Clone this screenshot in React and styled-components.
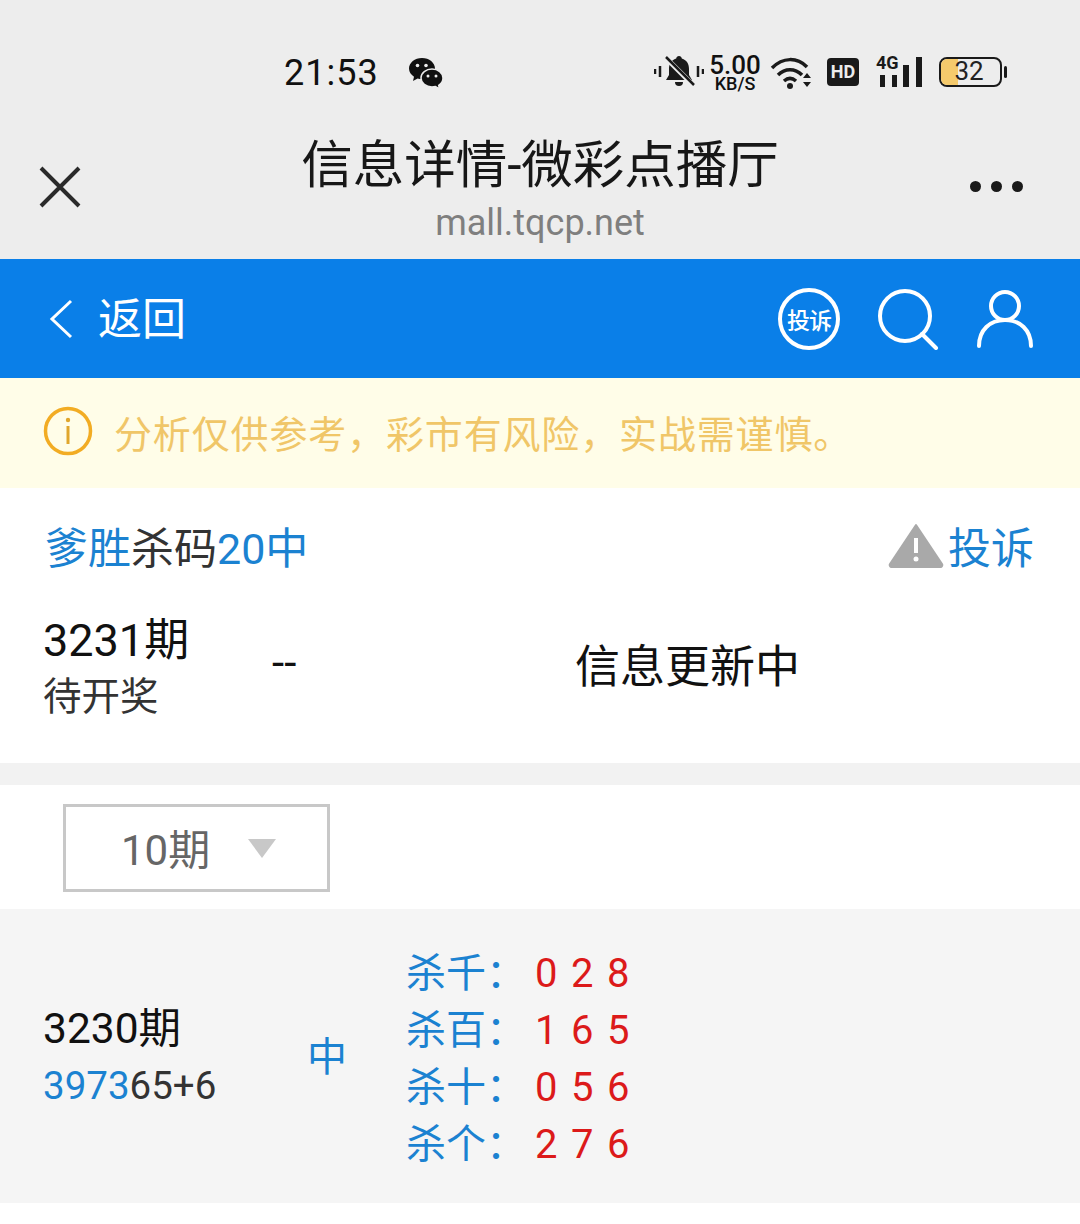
import React from 'react'
import styled, { createGlobalStyle } from 'styled-components'

const CJK = `Roboto, "Noto Sans CJK SC", sans-serif`

const Global = createGlobalStyle`
  html, body {
    margin: 0;
    padding: 0;
    background: #fff;
    font-family: ${CJK};
  }
`

const Page = styled.div`
  width: 1080px;
  height: 1224px;
  overflow: hidden;
  display: flex;
  flex-direction: column;
  background: #fff;
`

const TopChrome = styled.header`
  height: 259px;
  flex: none;
  background: #ededed;
  display: flex;
  flex-direction: column;
`

const StatusBar = styled.div`
  height: 130px;
  flex: none;
  padding: 51px 0 0 284px;
  box-sizing: border-box;
  display: flex;
  align-items: flex-start;
  color: #111;
`

const Clock = styled.span`
  font-size: 36px;
  line-height: 44px;
  letter-spacing: 1px;
  width: 124px;
`

const WeChatSlot = styled.span`
  margin-top: 6px;
  height: 32px;
`

const StatusIcons = styled.div`
  margin: -1px 0 0 210px;
  display: flex;
  align-items: center;
  height: 44px;
`

const Speed = styled.div`
  width: 54px;
  margin: 0 8px 0 4px;
  display: flex;
  flex-direction: column;
  align-items: center;
  font-weight: 500;
`

const SpeedValue = styled.span`
  font-size: 26px;
  line-height: 22px;
`

const SpeedUnit = styled.span`
  font-size: 18px;
  line-height: 15px;
`

const HdBadge = styled.span`
  width: 32px;
  height: 28px;
  margin: 0 16px 0 13px;
  background: #1a1a1a;
  color: #ededed;
  border-radius: 4px;
  font-size: 18px;
  font-weight: 700;
  line-height: 28px;
  text-align: center;
`

const Battery = styled.div`
  position: relative;
  width: 63px;
  height: 30px;
  box-sizing: border-box;
  margin-left: 16px;
  padding-right: 3px;
  border: 2.5px solid #1a1a1a;
  border-radius: 8px;
  overflow: hidden;
  text-align: center;
  font-size: 26px;
  line-height: 25px;
  color: #222;
`

const BatteryFill = styled.div`
  position: absolute;
  inset: 0 auto 0 0;
  width: 28%;
  background: #f5ca6c;
`

const BatteryLabel = styled.span`
  position: relative;
`

const BatteryTip = styled.span`
  width: 3px;
  height: 12px;
  margin-left: 2px;
  background: #1a1a1a;
  border-radius: 2px;
`

const TitleBar = styled.div`
  flex: 1;
  display: grid;
  grid-template-columns: 120px 1fr 120px;
  align-items: center;
`

const TitleBlock = styled.div`
  display: flex;
  flex-direction: column;
  align-items: center;
  margin-top: -13px;
`

const Title = styled.div`
  font-size: 51.5px;
  line-height: 70px;
  color: #171717;
  white-space: nowrap;
`

const Domain = styled.div`
  font-size: 36px;
  line-height: 44px;
  color: #7f7f7f;
`

const CloseSlot = styled.div`
  padding: 0 0 0 38px;
  height: 44px;
  margin-bottom: 16px;
`

const DotsSlot = styled.div`
  display: flex;
  justify-content: flex-end;
  gap: 10px;
  padding-right: 57px;
  margin-bottom: 16px;
`

const Dot = styled.span`
  width: 11px;
  height: 11px;
  flex: none;
  border-radius: 50%;
  background: #1a1a1a;
`

const NavBar = styled.nav`
  height: 119px;
  flex: none;
  background: #0a7fe8;
  color: #fff;
  display: flex;
  align-items: center;
  padding: 0 46px 0 48px;
`

const BackLabel = styled.span`
  margin: 2px 0 0 24px;
  font-size: 44px;
  line-height: 60px;
`

const NavIcons = styled.div`
  margin-left: auto;
  display: flex;
  align-items: center;
  gap: 37px;
`

const ReportCircle = styled.span`
  width: 62px;
  height: 62px;
  box-sizing: border-box;
  border: 4px solid #fff;
  border-radius: 50%;
  display: flex;
  align-items: center;
  justify-content: center;
  font-size: 23px;
  font-weight: 500;
  letter-spacing: -1px;
  white-space: nowrap;
`

const Notice = styled.div`
  height: 110px;
  flex: none;
  background: #fffde8;
  box-sizing: border-box;
  padding: 0 0 4px 43px;
  display: flex;
  align-items: center;
  color: #f0c668;
  font-size: 38px;
  letter-spacing: 0.85px;
`

const NoticeText = styled.span`
  margin-left: 21px;
  white-space: nowrap;
`

const Card = styled.section`
  height: 275px;
  flex: none;
  box-sizing: border-box;
  padding: 0 46px 0 43px;
  background: #fff;
`

const CardHead = styled.div`
  height: 120px;
  box-sizing: border-box;
  padding: 0 0 6px 2px;
  display: flex;
  align-items: center;
  justify-content: space-between;
  font-size: 43px;
  color: #333;
`

const Blue = styled.span`
  color: #1b82d1;
`

const ReportLink = styled.span`
  display: flex;
  align-items: center;
  gap: 4px;
  font-size: 43px;
  color: #1b82d1;
`

const CurrentRow = styled.div`
  margin-top: 4px;
  display: grid;
  grid-template-columns: 229px 303px auto;
  align-items: center;
  color: #111;
`

const Issue = styled.div`
  font-size: 45px;
  line-height: 58px;
`

const IssueStatus = styled.div`
  font-size: 38.5px;
  line-height: 54px;
  color: #333;
`

const Dash = styled.div`
  font-size: 44px;
  margin-bottom: 10px;
`

const Updating = styled.div`
  font-size: 45px;
  margin-bottom: 10px;
`

const Divider = styled.div`
  height: 22px;
  flex: none;
  background: #f2f2f2;
`

const FilterBar = styled.div`
  height: 124px;
  flex: none;
  box-sizing: border-box;
  padding: 19px 0 0 63px;
  background: #fff;
`

const Select = styled.div`
  width: 267px;
  height: 88px;
  box-sizing: border-box;
  border: 3px solid #c8c8c8;
  display: flex;
  align-items: center;
  padding: 0 0 4px 55px;
  font-size: 42px;
  color: #666;
`

const Caret = styled.span`
  margin: 4px 0 0 38px;
  border-style: solid;
  border-width: 19px 14.5px 0;
  border-color: #c8c8c8 transparent transparent;
`

const HistoryRow = styled.div`
  height: 294px;
  flex: none;
  box-sizing: border-box;
  background: #f5f5f5;
  display: flex;
  align-items: flex-start;
  padding: 36px 0 0 43px;
`

const HistoryIssue = styled.div`
  width: 264px;
  padding-top: 55px;
`

const HistoryTitle = styled.div`
  font-size: 42.5px;
  line-height: 58px;
  color: #111;
`

const HistoryCode = styled.div`
  font-size: 38.5px;
  line-height: 56px;
  color: #333;
`

const HitMark = styled.div`
  width: 99px;
  padding-top: 84px;
  font-size: 40px;
  line-height: 58px;
  color: #1b82d1;
`

const KillList = styled.div`
  display: flex;
  flex-direction: column;
`

const KillRow = styled.div`
  display: flex;
  font-size: 40px;
  line-height: 57px;
  color: #1b82d1;
`

const KillLabel = styled.span`
  width: 129px;
`

const KillDigits = styled.span`
  color: #dc1a1a;
  letter-spacing: 1.8px;
  white-space: pre;
`

const BellOff = () => (
  <svg width="50" height="36" viewBox="0 0 50 36">
    <path d="M25 2c1.6 0 2.6 1 2.8 2.400C33 6 35 10 35 15v6l3 5H12l3-5v-6c0-5 2-9 7.200-10.600C22.400 3 23.400 2 25 2z" fill="#1a1a1a" />
    <path d="M21 28h8a4 4 0 0 1-8 0z" fill="#1a1a1a" />
    <path d="M11 3l28 28" stroke="#ededed" strokeWidth="5" />
    <path d="M12 3l28 28" stroke="#1a1a1a" strokeWidth="2.500" />
    <path d="M1 15v5M6 12v11M44 12v11M49 15v5" stroke="#1a1a1a" strokeWidth="2.500" />
  </svg>
)

const Wifi = () => (
  <svg width="44" height="36" viewBox="0 0 44 36">
    <path d="M2 14C13 3 27 3 37 13M8 21c7-7 17-7 24 0M14 27c4-3.500 8-3.500 12 0" fill="none" stroke="#1a1a1a" strokeWidth="3.500" />
    <circle cx="20" cy="32" r="3" fill="#1a1a1a" />
    <path d="M33 24l4-5 4 5zM33 28l4 5 4-5z" fill="#1a1a1a" />
  </svg>
)

const Signal = () => (
  <svg width="48" height="38" viewBox="0 -2 48 38">
    <text x="1" y="14" fontSize="18" fontWeight="700" fill="#1a1a1a" fontFamily="Roboto, sans-serif">4G</text>
    <path d="M5 20h5v12H5zM17 20h5v12h-5zM28 10h6v22h-6zM41 2h6v30h-6z" fill="#1a1a1a" />
  </svg>
)

const WeChat = () => (
  <svg width="36" height="32" viewBox="0 0 36 32">
    <path d="M14 1C6.800 1 1 5.700 1 11.500c0 3.400 2 6.300 5 8.200L5 24l4.600-2.600c1.400.4 2.900.6 4.400.6 7.200 0 13-4.700 13-10.500S21.200 1 14 1z" fill="#111" />
    <path d="M24 12c-6 0-11 4-11 9s5 9 11 9c1.200 0 2.400-.2 3.500-.5L31.500 32l-.8-3.700c2.700-1.700 4.300-4.300 4.300-7.300 0-5-5-9-11-9z" fill="#111" stroke="#ededed" strokeWidth="1.500" />
    <circle cx="9.500" cy="8.500" r="1.800" fill="#ededed" />
    <circle cx="18" cy="8.500" r="1.800" fill="#ededed" />
    <circle cx="20" cy="19" r="1.500" fill="#ededed" />
    <circle cx="28" cy="19" r="1.500" fill="#ededed" />
  </svg>
)

const CloseIcon = () => (
  <svg width="44" height="44" viewBox="0 0 44 44">
    <path d="M3 3l38 38M41 3L3 41" stroke="#2a2a2a" strokeWidth="4" fill="none" />
  </svg>
)

const BackChevron = () => (
  <svg width="26" height="40" viewBox="0 0 26 40">
    <path d="M23 2L4 20l19 18" stroke="#fff" strokeWidth="3" fill="none" />
  </svg>
)

const SearchIcon = () => (
  <svg width="62" height="62" viewBox="0 0 62 62">
    <circle cx="28" cy="28" r="25" stroke="#fff" strokeWidth="4" fill="none" />
    <path d="M45 46l14 14" stroke="#fff" strokeWidth="4" strokeLinecap="round" />
  </svg>
)

const UserIcon = () => (
  <svg width="58" height="58" viewBox="0 0 58 58">
    <circle cx="29" cy="16" r="14" stroke="#fff" strokeWidth="4" fill="none" />
    <path d="M3 56c0-16 11-26 26-26s26 10 26 26" stroke="#fff" strokeWidth="4" fill="none" strokeLinecap="round" />
  </svg>
)

const InfoIcon = () => (
  <svg width="50" height="50" viewBox="0 0 50 50">
    <circle cx="25" cy="25" r="22.500" stroke="#f2ac23" strokeWidth="3.500" fill="none" />
    <circle cx="25" cy="14" r="2.200" fill="#e0a62c" />
    <path d="M25 20v18" stroke="#e0a62c" strokeWidth="3" />
  </svg>
)

const WarnIcon = () => (
  <svg width="56" height="46" viewBox="0 0 56 46">
    <path d="M28 3L54 42a2 2 0 0 1-2 3H4a2 2 0 0 1-2-3z" fill="#a9a9a9" stroke="#a9a9a9" strokeWidth="2" strokeLinejoin="round" />
    <path d="M28 16v15" stroke="#fff" strokeWidth="4" />
    <circle cx="28" cy="37" r="2.500" fill="#fff" />
  </svg>
)

// full-width punctuation, written as escapes
const COMMA = '\uFF0C'
const COLON = '\uFF1A'

const kills = [
  ['杀千', '0 2 8'],
  ['杀百', '1 6 5'],
  ['杀十', '0 5 6'],
  ['杀个', '2 7 6'],
]

export default function App() {
  return (
    <Page>
      <Global />
      <TopChrome>
        <StatusBar>
          <Clock>21:53</Clock>
          <WeChatSlot><WeChat /></WeChatSlot>
          <StatusIcons>
            <BellOff />
            <Speed>
              <SpeedValue>5.00</SpeedValue>
              <SpeedUnit>KB/S</SpeedUnit>
            </Speed>
            <Wifi />
            <HdBadge>HD</HdBadge>
            <Signal />
            <Battery>
              <BatteryFill />
              <BatteryLabel>32</BatteryLabel>
            </Battery>
            <BatteryTip />
          </StatusIcons>
        </StatusBar>
        <TitleBar>
          <CloseSlot><CloseIcon /></CloseSlot>
          <TitleBlock>
            <Title>信息详情-微彩点播厅</Title>
            <Domain>mall.tqcp.net</Domain>
          </TitleBlock>
          <DotsSlot><Dot /><Dot /><Dot /></DotsSlot>
        </TitleBar>
      </TopChrome>
      <NavBar>
        <BackChevron />
        <BackLabel>返回</BackLabel>
        <NavIcons>
          <ReportCircle>投诉</ReportCircle>
          <SearchIcon />
          <UserIcon />
        </NavIcons>
      </NavBar>
      <Notice>
        <InfoIcon />
        <NoticeText>{`分析仅供参考${COMMA}彩市有风险${COMMA}实战需谨慎。`}</NoticeText>
      </Notice>
      <Card>
        <CardHead>
          <span><Blue>爹胜</Blue>杀码<Blue>20中</Blue></span>
          <ReportLink><WarnIcon />投诉</ReportLink>
        </CardHead>
        <CurrentRow>
          <div>
            <Issue>3231期</Issue>
            <IssueStatus>待开奖</IssueStatus>
          </div>
          <Dash>--</Dash>
          <Updating>信息更新中</Updating>
        </CurrentRow>
      </Card>
      <Divider />
      <FilterBar>
        <Select>
          10期
          <Caret />
        </Select>
      </FilterBar>
      <HistoryRow>
        <HistoryIssue>
          <HistoryTitle>3230期</HistoryTitle>
          <HistoryCode><Blue>3973</Blue>65+6</HistoryCode>
        </HistoryIssue>
        <HitMark>中</HitMark>
        <KillList>
          {kills.map(([label, digits]) => (
            <KillRow key={label}>
              <KillLabel>{label + COLON}</KillLabel>
              <KillDigits>{digits}</KillDigits>
            </KillRow>
          ))}
        </KillList>
      </HistoryRow>
    </Page>
  )
}
